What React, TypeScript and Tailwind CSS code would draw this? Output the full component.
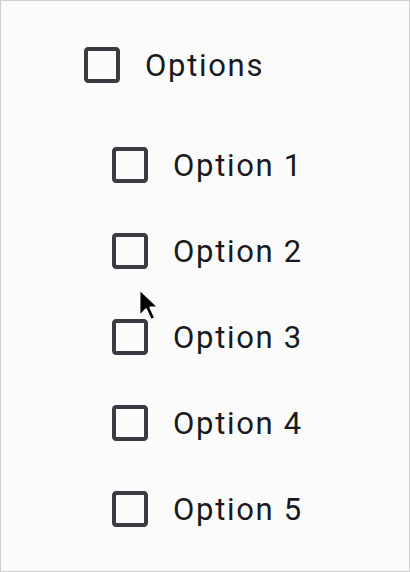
import React from "react";

const BOX =
  "M19 5v14H5V5h14m0-2H5c-1.1 0-2 .9-2 2v14c0 1.1.9 2 2 2h14c1.1 0 2-.9 2-2V5c0-1.1-.9-2-2-2z";

function Box() {
  return (
    <svg viewBox="0 0 24 24" className="h-12 w-12 shrink-0" fill="#3b3b42">
      <path d={BOX} />
    </svg>
  );
}

function Row({ label }: { label: string }) {
  return (
    <label className="flex h-12 items-center gap-[19px]">
      <Box />
      <span className="text-[31px] leading-none tracking-[1.7px] text-[#1a1a1e]">{label}</span>
    </label>
  );
}

export default function App() {
  const items = ["Option 1", "Option 2", "Option 3", "Option 4", "Option 5"];
  return (
    <div
      className="relative box-border h-[572px] w-[410px] border border-[#cfcfcf] bg-[#fcfcfc] pl-[77px] pt-[40px]"
      style={{ fontFamily: "Roboto, 'Noto Sans', sans-serif" }}
    >
      <Row label="Options" />
      <div className="mt-[52px] flex flex-col gap-[38px] pl-[28px]">
        {items.map((t) => (
          <Row key={t} label={t} />
        ))}
      </div>
      <svg
        viewBox="0 0 13 21"
        className="absolute left-[137px] top-[287px] h-[34px] w-[21px]"
      >
        <path
          d="M1 1 L1 17 L5 13 L8 19.5 L10.5 18.5 L7.5 12 L12.5 12 Z"
          fill="#000"
          stroke="#fff"
          strokeWidth="1"
          strokeLinejoin="round"
        />
      </svg>
    </div>
  );
}
